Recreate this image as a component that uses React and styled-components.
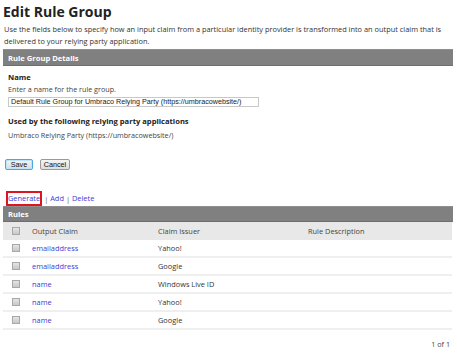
import React from "react";
import styled, { createGlobalStyle } from "styled-components";

const Global = createGlobalStyle`
  html, body { margin: 0; padding: 0; background: #fff; }
  body { font-family: "Open Sans", "Noto Sans", sans-serif; color: #333; }
  * { box-sizing: border-box; }
`;

const Page = styled.div`
  width: 457px;
  padding: 2px 4px 0 3px;
`;

const Title = styled.h1`
  margin: 0;
  font-size: 14px;
  line-height: 20px;
  font-weight: 700;
  color: #222;
`;

const Intro = styled.p`
  margin: 1px 0 0 1px;
  font-size: 7.4px;
  line-height: 12px;
  color: #333;
`;

const Bar = styled.div`
  margin-top: ${(p) => p.$mt || 0}px;
  height: ${(p) => p.$h || 17}px;
  background: #808080;
  border-top: 1px solid #8e8e8e;
  border-bottom: 1px solid #6e6e6e;
  color: #fff;
  font-weight: 700;
  font-size: 7.6px;
  display: flex;
  align-items: center;
  padding-left: 5px;
`;

const Section = styled.div`
  padding-left: 5px;
  display: flex;
  flex-direction: column;
  align-items: flex-start;
`;

const Label = styled.div`
  margin-top: ${(p) => p.$mt || 0}px;
  font-size: 7.6px;
  line-height: 12px;
  font-weight: 700;
  color: #222;
`;

const Text = styled.div`
  margin-top: ${(p) => p.$mt || 0}px;
  font-size: 7.2px;
  line-height: 12px;
  color: #444;
`;

const Input = styled.div`
  margin-top: 2px;
  width: 251px;
  height: 10px;
  border: 1px solid #c8c8c8;
  font-family: "Liberation Sans", Arial, sans-serif;
  font-size: 7.2px;
  line-height: 8px;
  padding-left: 2px;
  color: #222;
  white-space: nowrap;
  overflow: hidden;
`;

const Buttons = styled.div`
  margin-top: 18px;
  display: flex;
  gap: 7px;
  margin-left: -3px;
`;

const Button = styled.button`
  height: 11px;
  width: ${(p) => p.$w}px;
  padding: 0;
  font-family: "Liberation Sans", Arial, sans-serif;
  font-size: 7.2px;
  line-height: 9px;
  color: #111;
  border-radius: 2px;
  border: 1px solid ${(p) => (p.$focus ? "#4aa8e0" : "#9a9a9a")};
  box-shadow: ${(p) => (p.$focus ? "inset 0 0 0 1px #bfe3f7" : "none")};
  background: linear-gradient(#f4f4f4, #dcdcdc);
`;

const Toolbar = styled.div`
  margin-top: 22px;
  display: flex;
  align-items: center;
  height: 13px;
  padding-left: 3px;
  font-size: 7.4px;
  color: #555;
  gap: 2px;
`;

const Link = styled.a`
  color: #3b3bd4;
  text-decoration: none;
  line-height: 11px;
  ${(p) => (p.$boxed ? "border: 2px solid #e0141e; padding: 0;" : "")}
`;

const Grid = styled.div`
  display: grid;
  grid-template-columns: 25px 126px 150px 1fr;
  margin-right: 1px;
`;

const HeadCell = styled.div`
  height: 18px;
  background: #e8e8e8;
  display: flex;
  align-items: center;
  padding-left: ${(p) => p.$pl || 0}px;
  font-size: 7.4px;
  color: #444;
`;

const Cell = styled.div`
  height: 18px;
  border-bottom: 2px solid #efefef;
  display: flex;
  align-items: center;
  padding-left: ${(p) => p.$pl || 0}px;
  font-size: 7.4px;
  color: ${(p) => (p.$link ? "#3b3bd4" : "#333")};
`;

const Check = styled.span`
  width: 8px;
  height: 8px;
  border: 1px solid #a8a8a8;
  background: linear-gradient(#e4e4e4, #c8c8c8);
  display: inline-block;
  margin-left: 9px;
`;

const Footer = styled.div`
  margin-top: 8px;
  text-align: right;
  padding-right: 3px;
  font-size: 7.2px;
  line-height: 12px;
  color: #444;
`;

const rows = [
  ["emailaddress", "Yahoo!"],
  ["emailaddress", "Google"],
  ["name", "Windows Live ID"],
  ["name", "Yahoo!"],
  ["name", "Google"],
];

export default function App() {
  return (
    <>
      <Global />
      <Page>
        <Title>Edit Rule Group</Title>
        <Intro>
          Use the fields below to specify how an input claim from a particular identity provider is transformed into an output claim that is
          <br />
          delivered to your relying party application.
        </Intro>
        <Bar $mt={2}>Rule Group Details</Bar>
        <Section>
          <Label $mt={5}>Name</Label>
          <Text>Enter a name for the rule group.</Text>
          <Input>Default Rule Group for Umbraco Relying Party (https://umbracowebsite/)</Input>
          <Label $mt={8}>Used by the following relying party applications</Label>
          <Text $mt={2}>Umbraco Relying Party (https://umbracowebsite/)</Text>
          <Buttons>
            <Button $w={28} $focus>Save</Button>
            <Button $w={30}>Cancel</Button>
          </Buttons>
        </Section>
        <Toolbar>
          <Link $boxed href="#">Generate</Link>
          <span>|</span>
          <Link href="#">Add</Link>
          <span>|</span>
          <Link href="#">Delete</Link>
        </Toolbar>
        <Bar $mt={1} $h={16}>Rules</Bar>
        <Grid>
          <HeadCell><Check /></HeadCell>
          <HeadCell $pl={4}>Output Claim</HeadCell>
          <HeadCell $pl={4}>Claim Issuer</HeadCell>
          <HeadCell $pl={4}>Rule Description</HeadCell>
          {rows.map(([claim, issuer], i) => (
            <React.Fragment key={i}>
              <Cell><Check /></Cell>
              <Cell $pl={4} $link>{claim}</Cell>
              <Cell $pl={4}>{issuer}</Cell>
              <Cell />
            </React.Fragment>
          ))}
        </Grid>
        <Footer>1 of 1</Footer>
      </Page>
    </>
  );
}
